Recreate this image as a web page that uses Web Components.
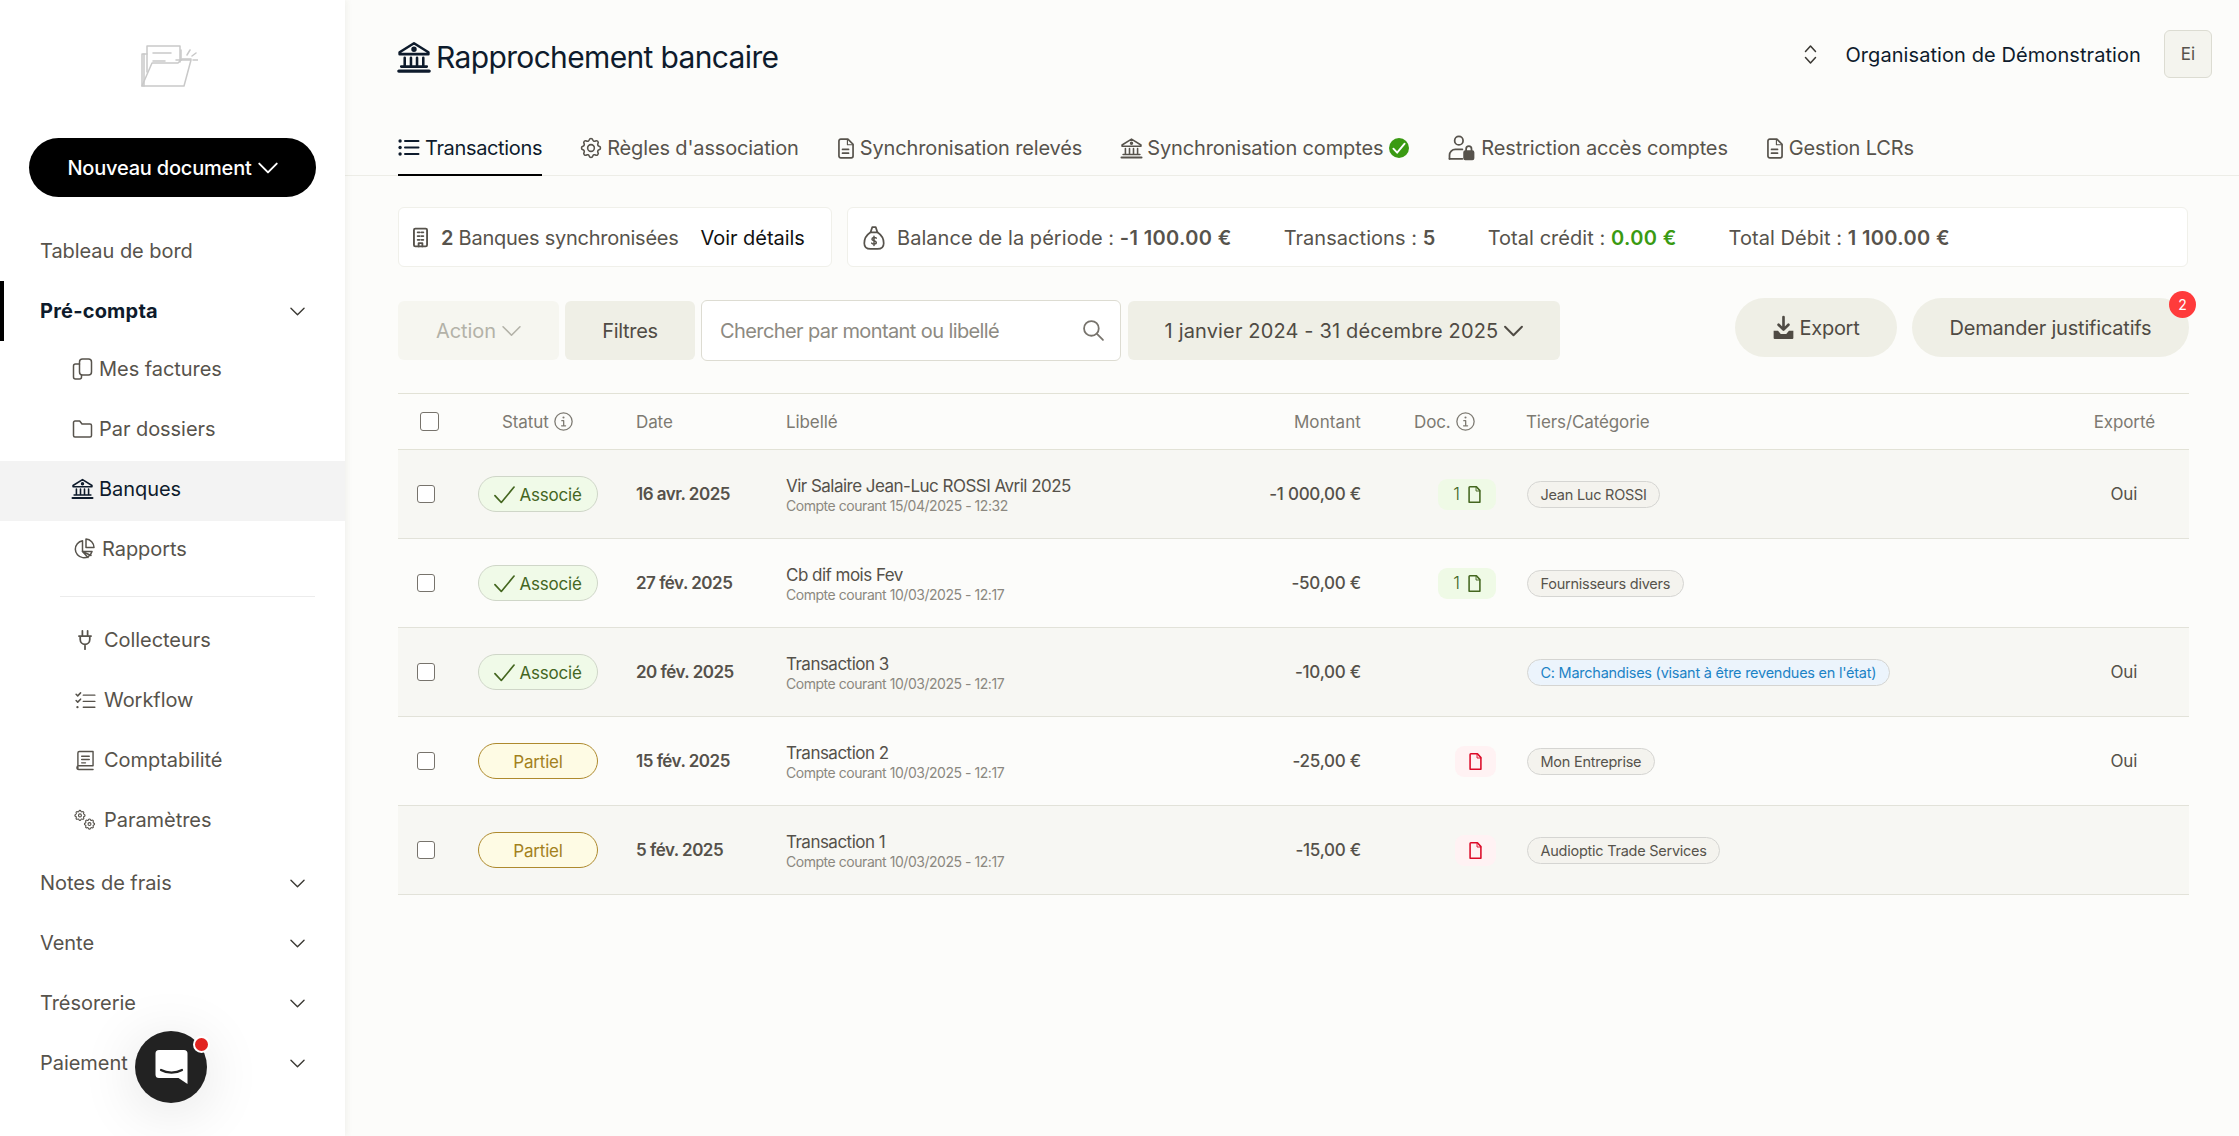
<!DOCTYPE html>
<html lang="fr">
<head>
<meta charset="utf-8">
<title>Rapprochement bancaire</title>
<style>
  html, body { margin: 0; height: 100%; }
  body { font-family: Inter, "Noto Sans", sans-serif; background: #fcfcfa; color: #55514a; overflow: hidden; }
  #app { display: flex; height: 1136px; }
</style>
</head>
<body>
<div id="app">
  <app-sidebar>
    <nav-item label="Tableau de bord"></nav-item>
    <nav-item label="Pré-compta" active chevron></nav-item>
    <nav-item label="Mes factures" sub icon="copy" iw="21" ih="22" offset="72" text="99" lift></nav-item>
    <nav-item label="Par dossiers" sub icon="folder" iw="21" ih="18" offset="72" text="99" lift></nav-item>
    <nav-item label="Banques" sub icon="bank" iw="21" ih="20" offset="72" text="99" lift current></nav-item>
    <nav-item label="Rapports" sub icon="pie" iw="22" ih="22" offset="73" text="102" lift></nav-item>
    <nav-divider></nav-divider>
    <nav-item label="Collecteurs" sub icon="plug" iw="16" ih="20" offset="77" text="104"></nav-item>
    <nav-item label="Workflow" sub icon="tasks" iw="21" ih="17" offset="75" text="104"></nav-item>
    <nav-item label="Comptabilité" sub icon="book" iw="18" ih="21" offset="76" text="104"></nav-item>
    <nav-item label="Paramètres" sub icon="gears" iw="26" ih="20" offset="72" text="104"></nav-item>
    <nav-item label="Notes de frais" chevron spaced></nav-item>
    <nav-item label="Vente" chevron></nav-item>
    <nav-item label="Trésorerie" chevron></nav-item>
    <nav-item label="Paiement" chevron></nav-item>
  </app-sidebar>

  <main-pane>
    <page-header></page-header>
    <tab-bar>
      <tab-item icon="list" iw="21" ih="17" active>Transactions</tab-item>
      <tab-item icon="gear" iw="20" ih="20">Règles d'association</tab-item>
      <tab-item icon="doc" iw="16" ih="21">Synchronisation relevés</tab-item>
      <tab-item icon="bank" iw="21" ih="21" tight done>Synchronisation comptes</tab-item>
      <tab-item icon="userlock" iw="27" ih="24">Restriction accès comptes</tab-item>
      <tab-item icon="doc" iw="16" ih="21">Gestion LCRs</tab-item>
    </tab-bar>
    <stat-bar></stat-bar>
    <tool-bar></tool-bar>
    <tx-table>
      <tx-row shaded status="ok" date="16 avr. 2025" title="Vir Salaire Jean-Luc ROSSI Avril 2025" meta="Compte courant 15/04/2025 - 12:32" amount="-1 000,00 €" doc="1" chip="Jean Luc ROSSI" exported></tx-row>
      <tx-row status="ok" date="27 fév. 2025" title="Cb dif mois Fev" meta="Compte courant 10/03/2025 - 12:17" amount="-50,00 €" doc="1" chip="Fournisseurs divers"></tx-row>
      <tx-row shaded status="ok" date="20 fév. 2025" title="Transaction 3" meta="Compte courant 10/03/2025 - 12:17" amount="-10,00 €" chip="C: Marchandises (visant à être revendues en l'état)" chip-kind="blue" exported></tx-row>
      <tx-row status="partial" date="15 fév. 2025" title="Transaction 2" meta="Compte courant 10/03/2025 - 12:17" amount="-25,00 €" doc="0" chip="Mon Entreprise" exported></tx-row>
      <tx-row shaded status="partial" date="5 fév. 2025" title="Transaction 1" meta="Compte courant 10/03/2025 - 12:17" amount="-15,00 €" doc="0" chip="Audioptic Trade Services"></tx-row>
    </tx-table>
  </main-pane>
</div>
<chat-launcher></chat-launcher>

<script>
const GEAR = 'M10.325 4.317c.426-1.756 2.924-1.756 3.35 0a1.724 1.724 0 0 0 2.573 1.066c1.543-.94 3.31.826 2.37 2.37a1.724 1.724 0 0 0 1.065 2.572c1.756.426 1.756 2.924 0 3.35a1.724 1.724 0 0 0-1.066 2.573c.94 1.543-.826 3.31-2.37 2.37a1.724 1.724 0 0 0-2.572 1.065c-.426 1.756-2.924 1.756-3.35 0a1.724 1.724 0 0 0-2.573-1.066c-1.543.94-3.31-.826-2.37-2.37a1.724 1.724 0 0 0-1.065-2.572c-1.756-.426-1.756-2.924 0-3.35a1.724 1.724 0 0 0 1.066-2.573c-.94-1.543.826-3.31 2.37-2.37.996.608 2.296.07 2.572-1.065z';

// [viewBox, strokes]: the boxes are cropped tight so width and height are the visible size
const ICONS = {
  bank: ['2 3 20 19', '<path d="M3 9.2 12 3.6l9 5.6v1.2H3z"/><circle cx="12" cy="7.4" r=".9"/><path d="M6.2 12.6v5M10.1 12.6v5M13.9 12.6v5M17.8 12.6v5M4 18.2h16"/><path d="M2.5 21h19" stroke-width="2"/>'],
  list: ['1.5 3.5 21 17', '<circle cx="3.6" cy="5.5" r="1.7" fill="currentColor" stroke="none"/><circle cx="3.6" cy="12" r="1.7" fill="currentColor" stroke="none"/><circle cx="3.6" cy="18.5" r="1.7" fill="currentColor" stroke="none"/><path d="M8.5 5.5H22M8.5 12H22M8.5 18.5H22" stroke-width="2"/>'],
  gear: ['2.5 2.5 19 19', `<path d="${GEAR}"/><circle cx="12" cy="12" r="3.2"/>`],
  doc: ['4 1 17 22', '<path d="M7 2h7.5L20 7.5V20a2 2 0 0 1-2 2H7a2 2 0 0 1-2-2V4a2 2 0 0 1 2-2z" stroke-width="1.8"/><path d="M14 2.4V8h5.6" stroke-width="1.2"/><path d="M8.8 13h6.4M8.8 17h6.4" stroke-width="1.8"/>'],
  page: ['4 1 16 22', '<path d="M6 2h8.5L19 7v15H5V3a1 1 0 0 1 1-1z" stroke-width="2"/><path d="M14 2.5V7.5h5" stroke-width="1.2"/>'],
  userlock: ['1 2 22.5 20.5', '<circle cx="10" cy="6" r="3.6"/><path d="M2 21.5v-3a5 5 0 0 1 5-5h6"/><path d="M2 21.5h11"/><rect x="14.5" y="15" width="8" height="7" rx="1" fill="currentColor"/><path d="M16.2 15v-2a2.3 2.3 0 0 1 4.6 0v2"/>'],
  copy: ['2 1 20 22', '<path d="M9 7H5a2 2 0 0 0-2 2v11a2 2 0 0 0 2 2h4a2 2 0 0 0 2-2v-2"/><path d="M9 5a3 3 0 0 1 3-3h6a3 3 0 0 1 3 3v10a3 3 0 0 1-3 3h-6a3 3 0 0 1-3-3z"/>'],
  folder: ['2 3 20 18', '<path d="M3 5.5A1.5 1.5 0 0 1 4.5 4h4.7l2.3 3h8A1.5 1.5 0 0 1 21 8.5V18.5A1.5 1.5 0 0 1 19.5 20h-15A1.5 1.5 0 0 1 3 18.5z"/>'],
  pie: ['.5 1.5 22 22', '<path d="M10 4.3A8.500 8.500 0 1 0 19.5 15H10z"/><path d="M13.5 2.5A8.500 8.500 0 0 1 21.5 11h-8z"/><path d="m10 15 5.500 6M10 15l8.500 4"/>'],
  plug: ['4 1 16 23', '<path d="M9 2v5M15 2v5M5 8h14M6.5 8v4a5.500 5.500 0 0 0 11 0V8M12 17.5V23" stroke-width="2"/>'],
  tasks: ['1 2 23 19', '<path d="m2 4.5 1.8 1.8L7 3M2 11.5l1.8 1.8L7 10" stroke-width="1.7"/><circle cx="3.5" cy="19" r="1.3" fill="currentColor" stroke="none"/><path d="M10 5.5h13M10 12.5h13M10 19h13"/>'],
  book: ['3 2 19 21', '<path d="M5 21V4.5A1.5 1.5 0 0 1 6.5 3H21v15H5.800A2 2 0 0 0 4 20a2 2 0 0 0 2 2h15"/><path d="M9 8h8M9 11.5h8M9 15h4"/>'],
  gears: ['0 0 24 22', `<g transform="translate(-1 -1.5) scale(.62)"><path d="${GEAR}" stroke-width="2"/><circle cx="12" cy="12" r="2.6" stroke-width="2"/></g><g transform="translate(9.5 8) scale(.62)"><path d="${GEAR}" stroke-width="2"/><circle cx="12" cy="12" r="2.6" stroke-width="2"/></g>`],
  chevron: ['3 7 18 11', '<path d="m4 8.5 8 8 8-8"/>'],
  updown: ['6 2.5 12 19', '<path d="m7 9 5-5.500L17 9M7 15l5 5.500 5-5.500"/>'],
  building: ['4 1.5 16 21', '<rect x="5" y="2.5" width="14" height="19" rx="1.5" stroke-width="2"/><path d="M9 6.5h2M13 6.5h2M9 10.5h2M13 10.5h2M9 14.5h2M13 14.5h2" stroke-width="2"/><path d="M10 21.5v-3.500h4v3.500" stroke-width="2"/>'],
  bag: ['2.5 1.5 19 21', '<path d="M9 7h6l-1.500-4.500h-3z"/><path d="M9 7c-3 2-5.500 6-5.500 9.500C3.500 20 6 21.500 9 21.500h6c3 0 5.500-1.500 5.500-5 0-3.500-2.500-7.500-5.500-9.500"/><path d="M14 12.2c-.5-.8-3.800-1-3.800.8 0 1.800 3.800 1 3.800 3 0 1.800-3.400 1.500-4 .5M12 10.5v8" stroke-width="1.3"/>'],
  search: ['2.5 2.5 20 20', '<circle cx="10.5" cy="10.5" r="7"/><path d="m15.8 15.8 5.700 5.700"/>'],
  info: ['1 1 22 22', '<circle cx="12" cy="12" r="10"/><circle cx="12" cy="7.3" r="1.2" fill="currentColor" stroke="none"/><path d="M10 11h2.200v6M9.800 17h4.600"/>'],
  download: ['3 1 18 21', '<path d="M12 2v11M7.5 9l4.500 4.500L16.5 9" stroke-width="2.4"/><path d="M3 14.5h4l2.500 3h5l2.500-3h4v6.500a1 1 0 0 1-1 1H4a1 1 0 0 1-1-1z" fill="currentColor" stroke="none"/>'],
  check: ['2.5 4 19 16', '<path d="m3 13 6 6.500L21 5"/>']
};

// generic svg icon, looks up its strokes in ICONS
class UiIcon extends HTMLElement {
  static get observedAttributes() { return ['name', 'w', 'h', 'stroke']; }
  connectedCallback() { this.render(); }
  attributeChangedCallback() { if (this.isConnected) this.render(); }
  render() {
    if (!this.shadowRoot) this.attachShadow({ mode: 'open' });
    const [box, body] = ICONS[this.getAttribute('name')] || ['0 0 24 24', ''];
    const w = this.getAttribute('w') || '20';
    const h = this.getAttribute('h') || w;
    const stroke = this.getAttribute('stroke') || '1.5';
    this.shadowRoot.innerHTML = `
      <style>
        :host { display: inline-flex; flex: none; width: ${w}px; height: ${h}px; }
        svg { width: 100%; height: 100%; fill: none; stroke: currentColor; stroke-width: ${stroke}; stroke-linecap: round; stroke-linejoin: round; overflow: visible; }
      </style>
      <svg viewBox="${box}">${body}</svg>`;
  }
}
customElements.define('ui-icon', UiIcon);

class AppSidebar extends HTMLElement {
  constructor() {
    super();
    this.attachShadow({ mode: 'open' }).innerHTML = `
      <style>
        :host { display: flex; flex-direction: column; flex: none; width: 345px; height: 100%; background: #fff; box-shadow: 2px 0 6px rgba(60,60,40,.06); position: relative; z-index: 1; }
        .logo { height: 138px; display: flex; justify-content: center; padding: 45px 8px 0 0; box-sizing: border-box; color: #c9c9c9; }
        .logo svg { width: 58px; height: 42px; fill: none; stroke: currentColor; stroke-width: 1.5; stroke-linejoin: round; stroke-linecap: round; }
        button { all: unset; box-sizing: border-box; display: flex; align-items: center; justify-content: center; gap: 6px; width: 287px; height: 59px; margin: 0 0 24px 29px; border-radius: 30px; background: #000; color: #fff; font-size: 20px; font-weight: 500; letter-spacing: -.2px; }
      </style>
      <div class="logo">
        <svg viewBox="0 0 58 42">
          <path d="M7 9H2v32h42l7-26H36"/>
          <path d="M4 9v32"/>
          <path d="M7 27V1h33v16"/>
          <path d="M2 41l10-23h26l4-4h9"/>
          <path d="M13 8h18M13 16h12M41 5v10"/>
          <path d="M47 10l3-5M52 11l4-3M53 15h5"/>
        </svg>
      </div>
      <button>Nouveau document <ui-icon name="chevron" w="20" h="12" stroke="1.8"></ui-icon></button>
      <slot></slot>`;
  }
}
customElements.define('app-sidebar', AppSidebar);

class NavItem extends HTMLElement {
  connectedCallback() {
    const a = n => this.getAttribute(n);
    const sub = this.hasAttribute('sub');
    const active = this.hasAttribute('active');
    const current = this.hasAttribute('current');
    const left = sub ? +a('offset') : 40;
    const textX = sub ? +a('text') : 40;
    this.attachShadow({ mode: 'open' }).innerHTML = `
      <style>
        :host { display: flex; align-items: center; height: 60px; box-sizing: border-box; position: relative; padding-left: ${left}px; padding-bottom: ${this.hasAttribute('lift') ? 5 : 0}px; margin-top: ${this.hasAttribute('spaced') ? 3 : 0}px;
          font-size: 20px; letter-spacing: ${active ? .2 : -.05}px; font-weight: ${active ? 700 : 400}; color: ${active || current ? '#0e1b2c' : '#57534c'}; background: ${current ? '#f3f3f3' : 'transparent'}; }
        .bar { position: absolute; left: 0; top: 0; width: 4px; height: 100%; background: #000; }
        .ico { display: inline-flex; width: ${textX - left}px; flex: none; }
        .label { flex: 1; }
        .chev { margin-right: 40px; color: #3a3833; }
      </style>
      ${active ? '<span class="bar"></span>' : ''}
      ${sub ? `<span class="ico"><ui-icon name="${a('icon')}" w="${a('iw')}" h="${a('ih')}"></ui-icon></span>` : ''}
      <span class="label">${a('label')}</span>
      ${this.hasAttribute('chevron') ? '<ui-icon class="chev" name="chevron" w="15" h="9" stroke="1.7"></ui-icon>' : ''}`;
  }
}
customElements.define('nav-item', NavItem);

class NavDivider extends HTMLElement {
  constructor() {
    super();
    this.attachShadow({ mode: 'open' }).innerHTML = `
      <style>
        :host { display: block; height: 1px; margin: 15px 30px 13px 60px; background: #ececec; }
      </style>`;
  }
}
customElements.define('nav-divider', NavDivider);

class MainPane extends HTMLElement {
  constructor() {
    super();
    this.attachShadow({ mode: 'open' }).innerHTML = `
      <style>
        :host { display: flex; flex-direction: column; flex: 1; min-width: 0; height: 100%; background: #fcfcfa; }
      </style>
      <slot></slot>`;
  }
}
customElements.define('main-pane', MainPane);

class PageHeader extends HTMLElement {
  constructor() {
    super();
    this.attachShadow({ mode: 'open' }).innerHTML = `
      <style>
        :host { display: flex; justify-content: space-between; height: 120px; box-sizing: border-box; padding: 30px 27px 0 53px; color: #0e1b2c; }
        h1 { display: flex; align-items: center; gap: 6px; margin: 4px 0 0; height: 46px; font-size: 30px; font-weight: 400; letter-spacing: -.65px; }
        .org { display: flex; align-items: center; height: 48px; font-size: 20px; letter-spacing: .08px; }
        .org ui-icon { margin-right: 28px; color: #3a3833; }
        .name { padding-top: 1px; }
        .avatar { display: flex; align-items: center; justify-content: center; width: 48px; height: 48px; box-sizing: border-box; margin-left: 23px; border: 1px solid #dcdcd2; border-radius: 6px; background: #f4f4ee; font-size: 17px; color: #57534c; }
      </style>
      <h1><ui-icon name="bank" w="32" h="31" stroke="1.6"></ui-icon>Rapprochement bancaire</h1>
      <div class="org">
        <ui-icon name="updown" w="13" h="19" stroke="1.5"></ui-icon>
        <span class="name">Organisation de Démonstration</span>
        <span class="avatar">Ei</span>
      </div>`;
  }
}
customElements.define('page-header', PageHeader);

class TabBar extends HTMLElement {
  constructor() {
    super();
    this.attachShadow({ mode: 'open' }).innerHTML = `
      <style>
        :host { display: flex; gap: 39px; height: 56px; box-sizing: border-box; padding-left: 53px; border-bottom: 1px solid #ededE7; }
      </style>
      <slot></slot>`;
  }
}
customElements.define('tab-bar', TabBar);

class TabItem extends HTMLElement {
  connectedCallback() {
    const active = this.hasAttribute('active');
    this.attachShadow({ mode: 'open' }).innerHTML = `
      <style>
        :host { display: flex; align-items: center; gap: ${this.hasAttribute('tight') ? 5 : 6}px; height: 56px; box-sizing: border-box; font-size: 20px; letter-spacing: ${active ? -.35 : -.14}px; color: ${active ? '#0e1b2c' : '#57534c'}; border-bottom: ${active ? '2px solid #000' : '0'}; padding-top: ${active ? 1 : 0}px; }
        .ok { display: inline-flex; width: 20px; height: 20px; border-radius: 50%; background: #3a9a12; color: #fff; align-items: center; justify-content: center; margin-left: 1px; }
      </style>
      <ui-icon name="${this.getAttribute('icon')}" w="${this.getAttribute('iw')}" h="${this.getAttribute('ih')}"></ui-icon>
      <slot></slot>
      ${this.hasAttribute('done') ? '<span class="ok"><ui-icon name="check" w="12" h="10" stroke="3"></ui-icon></span>' : ''}`;
  }
}
customElements.define('tab-item', TabItem);

class StatBar extends HTMLElement {
  constructor() {
    super();
    this.attachShadow({ mode: 'open' }).innerHTML = `
      <style>
        :host { display: flex; gap: 15px; margin: 31px 51px 0 53px; height: 60px; font-size: 20px; letter-spacing: -.25px; color: #57534c; }
        .card { display: flex; align-items: center; box-sizing: border-box; height: 60px; padding-top: 1px; background: #fff; border: 1px solid #f0f0ea; border-radius: 6px; }
        .banks { width: 434px; padding-left: 14px; }
        .balance { flex: 1; padding-left: 15px; letter-spacing: .05px; }
        b { font-weight: 600; }
        .balance b { letter-spacing: .35px; }
        .link { color: #111; margin-left: 22px; letter-spacing: -.05px; }
        .balance ui-icon { margin-right: 12px; }
        .banks ui-icon { margin-right: 13px; }
        .item { margin-right: 52px; }
        .green { color: #3a9a12; }
      </style>
      <div class="card banks">
        <ui-icon name="building" w="15" h="21"></ui-icon>
        <span><b>2</b> Banques synchronisées</span>
        <span class="link">Voir détails</span>
      </div>
      <div class="card balance">
        <ui-icon name="bag" w="22" h="24"></ui-icon>
        <span class="item">Balance de la période : <b>-1 100.00 €</b></span>
        <span class="item">Transactions : <b>5</b></span>
        <span class="item">Total crédit : <b class="green">0.00 €</b></span>
        <span class="item">Total Débit : <b>1 100.00 €</b></span>
      </div>`;
  }
}
customElements.define('stat-bar', StatBar);

class ToolBar extends HTMLElement {
  constructor() {
    super();
    this.attachShadow({ mode: 'open' }).innerHTML = `
      <style>
        :host { display: flex; align-items: flex-start; margin: 33px 50px 0 53px; height: 61px; font-size: 20px; letter-spacing: -.3px; color: #4f4b44; }
        .btn { display: flex; align-items: center; justify-content: center; gap: 6px; box-sizing: border-box; height: 59px; margin-top: 1px; border-radius: 6px; background: #efefe6; }
        .action { width: 161px; background: #f6f6f0; color: #b3b2a8; margin-right: 6px; letter-spacing: -.1px; }
        .filters { width: 130px; margin-right: 6px; }
        .search { display: flex; align-items: center; justify-content: space-between; box-sizing: border-box; width: 420px; height: 61px; padding: 0 16px 0 18px; background: #fff; border: 1px solid #dddcd2; border-radius: 6px; color: #8d8a82; margin-right: 7px; letter-spacing: -.6px; }
        .search ui-icon { color: #77736c; }
        .date { width: 432px; letter-spacing: .15px; }
        .pill { display: flex; align-items: center; justify-content: center; gap: 6px; box-sizing: border-box; height: 59px; margin-top: -2px; border-radius: 30px; background: #efefe6; position: relative; }
        .export { width: 162px; margin-left: auto; margin-right: 15px; }
        .ask { width: 277px; letter-spacing: -.2px; }
        .badge { position: absolute; top: -7px; right: -7px; display: flex; align-items: center; justify-content: center; width: 27px; height: 27px; border-radius: 50%; background: #ff3b3b; color: #fff; font-size: 14px; letter-spacing: 0; }
      </style>
      <div class="btn action">Action <ui-icon name="chevron" w="19" h="12"></ui-icon></div>
      <div class="btn filters">Filtres</div>
      <div class="search"><span>Chercher par montant ou libellé</span><ui-icon name="search" w="21" stroke="1.7"></ui-icon></div>
      <div class="btn date">1 janvier 2024 - 31 décembre 2025 <ui-icon name="chevron" w="19" h="12" stroke="1.9"></ui-icon></div>
      <div class="pill export"><ui-icon name="download" w="21" h="23"></ui-icon>Export</div>
      <div class="pill ask">Demander justificatifs<span class="badge">2</span></div>`;
  }
}
customElements.define('tool-bar', ToolBar);

const ROW_COLUMNS = '80px 158px 150px 435px 140px 165px 1fr 96px';

class TxTable extends HTMLElement {
  constructor() {
    super();
    this.attachShadow({ mode: 'open' }).innerHTML = `
      <style>
        :host { display: block; margin: 32px 50px 0 53px; border-top: 1px solid #e2e2d6; }
        .head { display: grid; grid-template-columns: ${ROW_COLUMNS}; align-items: center; height: 55px; border-bottom: 1px solid #e2e2d6; font-size: 17px; letter-spacing: -.1px; color: #7d7a72; }
        .box { appearance: none; display: block; box-sizing: border-box; width: 19px; height: 19px; margin: 0 0 0 22px; border: 1.5px solid #77736c; border-radius: 3px; background: #fff; }
        .st { padding-left: 24px; display: flex; align-items: center; gap: 5px; }
        .mt { text-align: right; letter-spacing: .1px; }
        .dc { padding-left: 53px; display: flex; align-items: center; gap: 5px; }
        .ex { text-align: right; padding-right: 34px; grid-column: 8; white-space: nowrap; }
      </style>
      <div class="head">
        <div><input class="box" type="checkbox"></div>
        <div class="st">Statut <ui-icon name="info" w="19"></ui-icon></div>
        <div>Date</div>
        <div>Libellé</div>
        <div class="mt">Montant</div>
        <div class="dc">Doc. <ui-icon name="info" w="19"></ui-icon></div>
        <div>Tiers/Catégorie</div>
        <div class="ex">Exporté</div>
      </div>
      <slot></slot>`;
  }
}
customElements.define('tx-table', TxTable);

class StatusBadge extends HTMLElement {
  connectedCallback() {
    const ok = this.getAttribute('kind') === 'ok';
    this.attachShadow({ mode: 'open' }).innerHTML = `
      <style>
        :host { display: flex; align-items: center; justify-content: center; gap: 4px; box-sizing: border-box; width: 120px; height: 36px; padding-top: 1px; border-radius: 18px; font-size: 17px; letter-spacing: -.2px;
          background: ${ok ? '#f0fae8' : '#fefbe4'}; border: 1px solid ${ok ? '#cfd6c8' : '#ae8a2e'}; color: ${ok ? '#44661f' : '#a3811e'}; }
      </style>
      ${ok ? '<ui-icon name="check" w="21" h="17" stroke="1.6"></ui-icon>' : ''}<slot></slot>`;
  }
}
customElements.define('status-badge', StatusBadge);

class TierChip extends HTMLElement {
  connectedCallback() {
    const blue = this.getAttribute('kind') === 'blue';
    this.attachShadow({ mode: 'open' }).innerHTML = `
      <style>
        :host { display: inline-flex; align-items: center; box-sizing: border-box; height: 27px; padding: 0 12.5px; margin-left: 1px; border-radius: 14px; font-size: 14.5px; letter-spacing: -.25px; white-space: nowrap;
          background: ${blue ? '#ecf4fc' : '#f4f3ee'}; border: 1px solid #d5d5d2; color: ${blue ? '#1c83c6' : '#57534c'}; }
      </style>
      <slot></slot>`;
  }
}
customElements.define('tier-chip', TierChip);

class DocChip extends HTMLElement {
  connectedCallback() {
    const count = this.getAttribute('count');
    const has = count !== '0';
    this.attachShadow({ mode: 'open' }).innerHTML = `
      <style>
        :host { display: inline-flex; align-items: center; justify-content: center; gap: 8px; box-sizing: border-box; width: ${has ? 58 : 41}px; height: 31px; border-radius: 9px; font-size: 17px; font-weight: 300; background: ${has ? '#effae6' : '#fff2f3'}; color: ${has ? '#44661f' : '#dc0a28'}; }
      </style>
      ${has ? `<span>${count}</span>` : ''}<ui-icon name="page" w="13" h="17" stroke="1.5"></ui-icon>`;
  }
}
customElements.define('doc-chip', DocChip);

class TxRow extends HTMLElement {
  connectedCallback() {
    const a = n => this.getAttribute(n);
    const hasDoc = this.hasAttribute('doc');
    this.attachShadow({ mode: 'open' }).innerHTML = `
      <style>
        :host { display: grid; grid-template-columns: ${ROW_COLUMNS}; align-items: center; height: 89px; box-sizing: border-box; border-bottom: 1px solid #e2e2d9; font-size: 17px; letter-spacing: -.25px; color: #55514a; background: ${this.hasAttribute('shaded') ? '#f7f7f3' : 'transparent'}; }
        .box { appearance: none; display: block; box-sizing: border-box; width: 18px; height: 18px; margin: 0 0 0 19px; border: 1.5px solid #77736c; border-radius: 3px; background: #fff; }
        .date { font-weight: 600; letter-spacing: -.5px; }
        .title { line-height: 22px; margin-top: 2px; letter-spacing: -.52px; }
        .meta { font-size: 14px; line-height: 18px; color: #8b8880; letter-spacing: -.46px; }
        .amount { text-align: right; font-weight: 500; }
        .doc { display: flex; justify-content: flex-end; padding-right: 30px; }
        .yes { text-align: right; padding-right: 52px; }
      </style>
      <div><input class="box" type="checkbox"></div>
      <div><status-badge kind="${a('status')}">${a('status') === 'ok' ? 'Associé' : 'Partiel'}</status-badge></div>
      <div class="date">${a('date')}</div>
      <div>
        <div class="title">${a('title')}</div>
        <div class="meta">${a('meta')}</div>
      </div>
      <div class="amount">${a('amount')}</div>
      <div class="doc">${hasDoc ? `<doc-chip count="${a('doc')}"></doc-chip>` : ''}</div>
      <div><tier-chip kind="${a('chip-kind') || ''}">${a('chip')}</tier-chip></div>
      <div class="yes">${this.hasAttribute('exported') ? 'Oui' : ''}</div>`;
  }
}
customElements.define('tx-row', TxRow);

class ChatLauncher extends HTMLElement {
  constructor() {
    super();
    this.attachShadow({ mode: 'open' }).innerHTML = `
      <style>
        :host { position: fixed; left: 135px; top: 1031px; z-index: 5; display: flex; align-items: center; justify-content: center; width: 72px; height: 72px; border-radius: 50%; background: #222; box-shadow: 0 8px 60px rgba(0,0,0,.12); }
        .dot { position: absolute; left: 58px; top: 5px; width: 13px; height: 13px; border-radius: 50%; background: #e2231f; border: 2px solid #fff; }
        svg { width: 33px; height: 36px; }
      </style>
      <svg viewBox="0 0 33 36">
        <path d="M4 1h25a3.5 3.5 0 0 1 3.5 3.5V35l-9-6H4a3.5 3.5 0 0 1-3.5-3.5v-21A3.5 3.5 0 0 1 4 1z" fill="#fff"/>
        <path d="M6 21c6 3.5 15 3.5 21 0" fill="none" stroke="#222" stroke-width="2.2" stroke-linecap="round"/>
      </svg>
      <span class="dot"></span>`;
  }
}
customElements.define('chat-launcher', ChatLauncher);
</script>
</body>
</html>
